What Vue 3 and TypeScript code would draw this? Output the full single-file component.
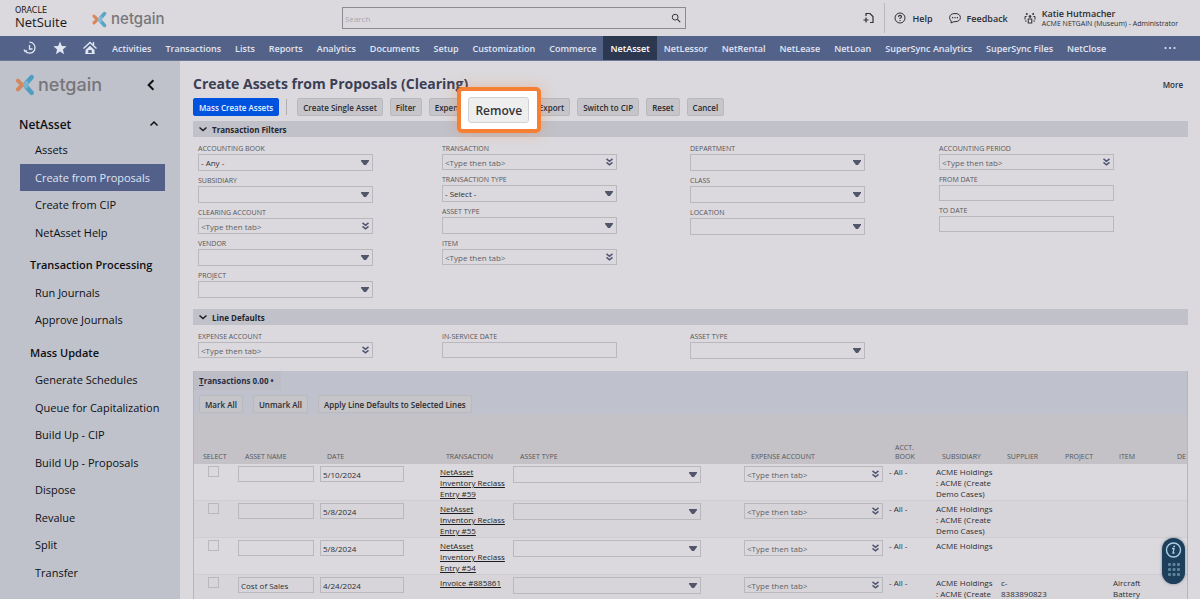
<script setup lang="ts">
import { ref } from 'vue'

type Kind = 'select' | 'lookup' | 'text'
interface Field { id: string; label: string; kind: Kind; value?: string }
interface Row { name: string; date: string; transaction: string; subsidiary: string; supplier: string; item: string }

const navItems = [
  'Activities', 'Transactions', 'Lists', 'Reports', 'Analytics', 'Documents', 'Setup', 'Customization',
  'Commerce', 'NetAsset', 'NetLessor', 'NetRental', 'NetLease', 'NetLoan', 'SuperSync Analytics',
  'SuperSync Files', 'NetClose',
]
const activeNav = ref('NetAsset')

const sideGroups = [
  { title: '', items: ['Assets', 'Create from Proposals', 'Create from CIP', 'NetAsset Help'] },
  { title: 'Transaction Processing', items: ['Run Journals', 'Approve Journals'] },
  {
    title: 'Mass Update',
    items: ['Generate Schedules', 'Queue for Capitalization', 'Build Up - CIP', 'Build Up - Proposals',
      'Dispose', 'Revalue', 'Split', 'Transfer'],
  },
]
const activeSide = ref('Create from Proposals')

const filterColumns: Field[][] = [
  [
    { id: 'book', label: 'ACCOUNTING BOOK', kind: 'select', value: '- Any -' },
    { id: 'subsidiary', label: 'SUBSIDIARY', kind: 'select' },
    { id: 'clearing', label: 'CLEARING ACCOUNT', kind: 'lookup' },
    { id: 'vendor', label: 'VENDOR', kind: 'select' },
    { id: 'project', label: 'PROJECT', kind: 'select' },
  ],
  [
    { id: 'transaction', label: 'TRANSACTION', kind: 'lookup' },
    { id: 'transaction-type', label: 'TRANSACTION TYPE', kind: 'select', value: '- Select -' },
    { id: 'asset-type', label: 'ASSET TYPE', kind: 'select' },
    { id: 'item', label: 'ITEM', kind: 'lookup' },
  ],
  [
    { id: 'department', label: 'DEPARTMENT', kind: 'select' },
    { id: 'class', label: 'CLASS', kind: 'select' },
    { id: 'location', label: 'LOCATION', kind: 'select' },
  ],
  [
    { id: 'period', label: 'ACCOUNTING PERIOD', kind: 'lookup' },
    { id: 'from', label: 'FROM DATE', kind: 'text' },
    { id: 'to', label: 'TO DATE', kind: 'text' },
  ],
]
const defaultColumns: Field[][] = [
  [{ id: 'default-expense', label: 'EXPENSE ACCOUNT', kind: 'lookup' }],
  [{ id: 'in-service', label: 'IN-SERVICE DATE', kind: 'text' }],
  [{ id: 'default-asset-type', label: 'ASSET TYPE', kind: 'select' }],
]
const sections = [
  { title: 'Transaction Filters', columns: filterColumns },
  { title: 'Line Defaults', columns: defaultColumns },
]

const columns = [
  { key: 'select', label: 'SELECT' }, { key: 'name', label: 'ASSET NAME' }, { key: 'date', label: 'DATE' },
  { key: 'transaction', label: 'TRANSACTION' }, { key: 'type', label: 'ASSET TYPE' },
  { key: 'expense', label: 'EXPENSE ACCOUNT' }, { key: 'book', label: 'ACCT. BOOK' },
  { key: 'subsidiary', label: 'SUBSIDIARY' }, { key: 'supplier', label: 'SUPPLIER' },
  { key: 'project', label: 'PROJECT' }, { key: 'item', label: 'ITEM' }, { key: 'dept', label: 'DE' },
]
const full = 'ACME Holdings : ACME (Create Demo Cases)'
const rows: Row[] = [
  { name: '', date: '5/10/2024', transaction: 'NetAsset Inventory Reclass Entry #59', subsidiary: full, supplier: '', item: '' },
  { name: '', date: '5/8/2024', transaction: 'NetAsset Inventory Reclass Entry #55', subsidiary: full, supplier: '', item: '' },
  { name: '', date: '5/8/2024', transaction: 'NetAsset Inventory Reclass Entry #54', subsidiary: 'ACME Holdings', supplier: '', item: '' },
  { name: 'Cost of Sales', date: '4/24/2024', transaction: 'Invoice #885861', subsidiary: 'ACME Holdings : ACME (Create', supplier: 'c- 8383890823', item: 'Aircraft Battery' },
]
const dots = [0, 1, 2, 3, 4, 5, 6, 7, 8]
</script>

<template>
  <div class="app">
    <header class="top">
      <div class="logos">
        <div class="netsuite"><span class="oracle">ORACLE</span><span class="suite">NetSuite</span></div>
        <div class="netgain">
          <svg class="mark" viewBox="0 0 18 20" fill="none" stroke-linecap="round" stroke-linejoin="round">
            <path d="M2.500 6 L5.500 9 M5.500 11 L2.500 14" stroke="#df8358" stroke-width="3.600" />
            <path d="M15 3 L10 8.500 Q9 10 10 11.500 L15 17" stroke="#5ba6c8" stroke-width="4.200" />
            <path d="M10.500 8 Q8.500 10 10 11.500" stroke="#87bdd3" stroke-width="3.600" />
          </svg>
          <span>netgain</span>
        </div>
      </div>
      <div class="search">
        <input type="search" placeholder="Search" aria-label="Search" />
        <button type="button" aria-label="Run search">
          <svg viewBox="0 0 12 12" fill="none" stroke="#38383c"><circle cx="5" cy="5" r="3.500" stroke-width="1.200" /><path d="M7.700 7.700 L11 11" stroke-width="1.500" /></svg>
        </button>
      </div>
      <div class="tools">
        <button type="button" class="tool add" aria-label="Add document">
          <svg viewBox="0 0 12 12" fill="none" stroke="#303034" stroke-width="1.200"><path d="M3 4 V1.500 H7 L10 4.500 V10.500 H7" /><path d="M.5 8 H5.500 M3 5.500 V10.500" /></svg>
        </button>
        <button type="button" class="tool help">
          <svg viewBox="0 0 12 12" fill="none" stroke="#303034"><circle cx="6" cy="6" r="5" /><path d="M4.500 5 Q4.500 3.400 6 3.400 Q7.500 3.400 7.500 4.700 Q7.500 5.500 6 6.200 V7 M6 8 V9" stroke-width="1.100" /></svg>
          Help
        </button>
        <button type="button" class="tool feedback">
          <svg viewBox="0 0 12 12" fill="none" stroke="#303034"><path d="M2.200 9 Q.6 7.500 .6 5.600 Q.8 1.600 6 1.500 Q11.300 1.600 11.400 5.600 Q11.200 9.500 6 9.700 H4.800 L2 11 Z" /><path d="M3 5.700 H4.200 M5.400 5.700 H6.600 M7.800 5.700 H9" stroke-width="1.200" /></svg>
          Feedback
        </button>
        <button type="button" class="tool role">
          <svg viewBox="0 0 12 12" fill="none" stroke="#303034"><rect x="4.200" y="7" width="3.600" height="4" /><circle cx="6" cy="4.500" r=".9" fill="#303034" /><circle cx="2.800" cy="2" r=".6" fill="#303034" /><circle cx="9.200" cy="2" r=".6" fill="#303034" /><path d="M2.600 4.500 H1 V7.500 M9.400 4.500 H11 V7.500 M1 9 H2.600 M11 9 H9.400" /></svg>
          <span class="who"><b>Katie Hutmacher</b><small>ACME NETGAIN (Museum) - Administrator</small></span>
        </button>
      </div>
    </header>

    <nav class="nav">
      <a href="#" class="icon" aria-label="Recent">
        <svg viewBox="0 0 14 14" fill="none" stroke="#e1e6f3" stroke-width="1.300"><path d="M6.500 1.200 A5.500 5.500 0 1 1 2.200 10" /><path d="M1 8.500 L2 10.500 L4 9.500 M6.500 4 V8 H9.500" /></svg>
      </a>
      <a href="#" class="icon" aria-label="Favorites">
        <svg viewBox="0 0 14 14" fill="#e1e6f3"><path d="M7 .5 L8.800 5 L13.600 5.300 L9.900 8.400 L11.100 13.200 L7 10.500 L2.900 13.200 L4.100 8.400 L.4 5.300 L5.200 5 Z" /></svg>
      </a>
      <a href="#" class="icon" aria-label="Home">
        <svg viewBox="0 0 14 14" fill="none" stroke="#e1e6f3" stroke-width="1.400"><path d="M.5 7.500 L7 1.500 L13.500 7.500 M10.500 1 V4" /><path d="M2.500 9 L7 4.800 L11.500 9 V13 H8.700 V9 H5.300 V13 H2.500 Z" fill="#e1e6f3" stroke="none" /><path d="M2.500 12.500 H11.500" stroke-width="1" /></svg>
      </a>
      <a v-for="n in navItems" :key="n" href="#" :class="['link', { active: n === activeNav }]" @click.prevent="activeNav = n">{{ n }}</a>
      <button type="button" class="dots" aria-label="More tabs"><svg viewBox="0 0 12 4" fill="#e1e6f3"><circle cx="1.500" cy="2" r="1.100" /><circle cx="6" cy="2" r="1.100" /><circle cx="10.500" cy="2" r="1.100" /></svg></button>
    </nav>

    <div class="body">
      <aside class="side">
        <div class="side-head">
          <div class="netgain big">
            <svg class="mark" viewBox="0 0 18 20" fill="none" stroke-linecap="round" stroke-linejoin="round">
              <path d="M2.500 6 L5.500 9 M5.500 11 L2.500 14" stroke="#d4875f" stroke-width="3.600" />
              <path d="M15 3 L10 8.500 Q9 10 10 11.500 L15 17" stroke="#4f9dc0" stroke-width="4.200" />
              <path d="M10.500 8 Q8.500 10 10 11.500" stroke="#7db4cc" stroke-width="3.600" />
            </svg>
            <span>netgain</span>
          </div>
          <button type="button" aria-label="Collapse sidebar"><svg viewBox="0 0 10 10" fill="none" stroke="#111"><path d="M7 1 L3 5 L7 9" stroke-width="1.600" /></svg></button>
        </div>
        <div class="side-title">
          NetAsset
          <button type="button" aria-label="Collapse NetAsset"><svg viewBox="0 0 10 10" fill="none" stroke="#111"><path d="M1.500 6.500 L5 3 L8.500 6.500" stroke-width="1.500" /></svg></button>
        </div>
        <section v-for="g in sideGroups" :key="g.title" class="group">
          <h3 v-if="g.title">{{ g.title }}</h3>
          <a v-for="i in g.items" :key="i" href="#" :class="{ active: i === activeSide }" @click.prevent="activeSide = i">{{ i }}</a>
        </section>
      </aside>

      <main class="main">
        <div class="title">
          <h1>Create Assets from Proposals (Clearing)</h1>
          <a href="#">More</a>
        </div>
        <div class="actions">
          <button type="button" class="btn primary">Mass Create Assets</button>
          <span class="divider"></span>
          <button type="button" class="btn">Create Single Asset</button>
          <button type="button" class="btn">Filter</button>
          <button type="button" class="btn">Expense</button>
          <div class="slot">
            <div class="spotlight"><button type="button">Remove</button></div>
          </div>
          <button type="button" class="btn">Export</button>
          <button type="button" class="btn">Switch to CIP</button>
          <button type="button" class="btn">Reset</button>
          <button type="button" class="btn">Cancel</button>
        </div>

        <section v-for="s in sections" :key="s.title" class="section">
          <h2><svg viewBox="0 0 10 10" fill="none" stroke="#1c1c20"><path d="M1.500 3.500 L5 6.500 L8.500 3.500" stroke-width="1.500" /></svg>{{ s.title }}</h2>
          <div class="fields">
            <div v-for="(col, c) in s.columns" :key="c" class="field-col">
              <div v-for="f in col" :key="f.id" class="field">
                <label :for="f.id">{{ f.label }}</label>
                <div v-if="f.kind === 'select'" class="control">
                  <select :id="f.id"><option>{{ f.value }}</option></select>
                  <svg class="arrow" viewBox="0 0 8 5"><path d="M0 0 H8 V1 L5 5 H3 L0 1 Z" /></svg>
                </div>
                <div v-else-if="f.kind === 'lookup'" class="control">
                  <input :id="f.id" type="text" placeholder="&lt;Type then tab&gt;" />
                  <svg class="chev" viewBox="0 0 8 8"><path d="M1 .8 L4 3.300 L7 .8 M1 4.300 L4 6.800 L7 4.300" /></svg>
                </div>
                <div v-else class="control"><input :id="f.id" type="text" /></div>
              </div>
            </div>
          </div>
        </section>

        <section class="lines">
          <div class="tabs"><a href="#"><u>T</u>ransactions 0.00 •</a></div>
          <div class="line-actions">
            <button type="button" class="btn">Mark All</button>
            <button type="button" class="btn">Unmark All</button>
            <button type="button" class="btn">Apply Line Defaults to Selected Lines</button>
          </div>
          <table>
            <colgroup><col v-for="c in columns" :key="c.key" :class="'c-' + c.key" /></colgroup>
            <thead><tr><th v-for="c in columns" :key="c.key" scope="col">{{ c.label }}</th></tr></thead>
            <tbody>
              <tr v-for="(r, i) in rows" :key="i">
                <td class="pick"><input type="checkbox" :aria-label="'Select line ' + (i + 1)" /></td>
                <td><div class="control name"><input type="text" :value="r.name" aria-label="Asset name" /></div></td>
                <td><div class="control date"><input type="text" :value="r.date" aria-label="Date" /></div></td>
                <td class="tran"><a href="#">{{ r.transaction }}</a></td>
                <td>
                  <div class="control type">
                    <select aria-label="Asset type"><option></option></select>
                    <svg class="arrow" viewBox="0 0 8 5"><path d="M0 0 H8 V1 L5 5 H3 L0 1 Z" /></svg>
                  </div>
                </td>
                <td>
                  <div class="control expense">
                    <input type="text" placeholder="&lt;Type then tab&gt;" aria-label="Expense account" />
                    <svg class="chev" viewBox="0 0 8 8"><path d="M1 .8 L4 3.300 L7 .8 M1 4.300 L4 6.800 L7 4.300" /></svg>
                  </div>
                </td>
                <td class="txt">- All -</td>
                <td class="txt">{{ r.subsidiary }}</td>
                <td class="txt">{{ r.supplier }}</td>
                <td></td>
                <td class="txt">{{ r.item }}</td>
                <td></td>
              </tr>
            </tbody>
          </table>
        </section>
      </main>
    </div>

    <button type="button" class="widget" aria-label="Open guide">
      <svg viewBox="0 0 23 46" fill="none">
        <circle cx="11.500" cy="12" r="7" stroke="#a9cfe4" stroke-width="1.400" />
        <path d="M10 10.500 H12 L11 15 H12.500" stroke="#a9cfe4" stroke-width="1.300" /><circle cx="12.200" cy="8.300" r=".9" fill="#a9cfe4" />
        <rect v-for="d in dots" :key="d" :x="6 + (d % 3) * 4.5" :y="25 + Math.floor(d / 3) * 5" width="3" height="3" rx="1" fill="#5d849c" />
      </svg>
    </button>
  </div>
</template>

<style>
html, body { background: #dbd9dd; }
</style>

<style scoped>
.app, .app * { box-sizing: border-box; }
.app {
  height: 100vh; overflow: hidden; display: flex; flex-direction: column;
  font-family: "Open Sans", sans-serif; font-size: 8px; color: #2d2d33; background: #dbd9dd;
}
button { font: inherit; color: inherit; border: 0; background: none; padding: 0; white-space: nowrap; }
a { color: inherit; text-decoration: none; }
svg { display: block; flex: none; }

.top { flex: none; height: 36px; display: flex; align-items: center; padding: 0 22px 0 15px; }
.logos { width: 327px; display: flex; align-items: center; gap: 24px; }
.netsuite { display: flex; flex-direction: column; color: #17171a; }
.oracle { font: 8px/8px "DejaVu Sans", sans-serif; }
.suite { font-size: 13px; line-height: 14px; }
.netgain { display: flex; align-items: center; gap: 3px; color: #77767a; font: 500 15px/20px Inter, sans-serif; padding-top: 2px; }
.netgain .mark { width: 17px; height: 17px; }
.netgain.big { font-size: 18px; padding: 0; }
.netgain.big .mark { width: 20px; height: 22px; }
.search { flex: 0 1 344px; height: 22px; display: flex; align-items: center; border: 1px solid #8b8a8f; padding-right: 4px; }
.search input { flex: 1; min-width: 0; border: 0; background: none; font: 8px "Open Sans", sans-serif; padding: 0 2px; outline: 0; }
.search input::placeholder { color: #aaa8ad; }
.search svg { width: 10px; height: 10px; }
.tools { margin-left: auto; display: flex; align-items: center; height: 30px; font-weight: 600; font-size: 9px; }
.tool { display: flex; align-items: center; gap: 6px; }
.tool svg { width: 12px; height: 12px; }
.add { padding-right: 9px; height: 30px; border-right: 1px solid #b9b8bd; }
.help { padding-left: 9px; }
.feedback { padding-left: 16px; }
.role { padding-left: 16px; }
.who { display: flex; flex-direction: column; text-align: left; }
.who b { font-weight: 600; font-size: 9px; line-height: 11px; }
.who small { font-size: 7px; line-height: 10px; font-weight: 400; }

.nav { flex: none; height: 25px; display: flex; align-items: stretch; padding: 0 24px 0 15px; background: #536289; color: #e1e6f3; font-size: 9px; font-weight: 600; border-bottom: 1px solid #6b789a; }
.icon { width: 30px; display: flex; align-items: center; justify-content: center; }
.icon svg { width: 14px; height: 14px; }
.link { display: flex; align-items: center; padding: 0 7px; white-space: nowrap; }
.link.active { background: #2c3850; color: #fff; }
.dots { margin-left: auto; }
.dots svg { width: 12px; height: 4px; }

.body { flex: 1; min-height: 0; display: flex; }
.side { flex: 0 0 180px; background: #bfc2cb; color: #0e0f13; padding: 10px 15px 0; font-size: 11px; }
.side-head { display: flex; align-items: center; justify-content: space-between; height: 28px; padding-right: 8px; }
.side-head button svg { width: 12px; height: 12px; }
.side-title { display: flex; align-items: center; justify-content: space-between; height: 24px; margin-top: 13px; padding: 0 6px 0 4px; font-size: 12px; font-weight: 600; }
.side-title svg { width: 10px; height: 10px; }
.group { margin-bottom: 5px; padding-left: 5px; }
.group h3 { margin: 0; padding-left: 10px; font-size: 11px; line-height: 2.5; font-weight: 600; white-space: nowrap; }
.group a { display: block; padding-left: 15px; line-height: 2.5; white-space: nowrap; }
.group a.active { background: #53618a; color: #dfe4f2; }

.main { flex: 1; min-width: 0; padding: 12px 12px 0 13px; }
.title { display: flex; justify-content: space-between; align-items: center; height: 22px; padding-right: 5px; }
.title h1 { margin: 0; font-size: 14px; line-height: 22px; font-weight: 700; color: #3b3f55; }
.title a { font-weight: 600; }
.actions { display: flex; align-items: center; gap: 7px; height: 18px; margin-top: 3px; }
.btn { height: 18px; padding: 0 5px; border: 1px solid #b9b8bd; border-radius: 2px; background: #c6c5c9; font-weight: 600; color: #2b2b30; }
.btn.primary { background: #0053df; border-color: #0053df; color: #eaf1ff; }
.divider { width: 1px; height: 16px; background: #b0afb4; margin-right: 3px; }
.slot { position: relative; width: 46px; height: 18px; }
.spotlight {
  position: absolute; z-index: 2; left: 50%; top: 50%; width: 84px; height: 46px; margin: -20px 0 0 -46px;
  display: flex; align-items: center; justify-content: center; background: #fff;
  border: 4px solid #f57f33; border-radius: 5px; box-shadow: 0 0 14px rgba(245, 127, 51, 0.35);
}
.spotlight button { width: 61px; height: 26px; border: 1px solid #d2d2d4; border-radius: 3px; background: #eeeeef; font-size: 12px; font-weight: 600; color: #333338; }

.section h2 { margin: 0; display: flex; align-items: center; gap: 4px; height: 16px; padding-left: 5px; background: #c0c1c9; font-size: 8px; font-weight: 700; color: #25252b; }
.section h2 svg { width: 10px; height: 10px; }
.actions + .section { margin-top: 5px; }
.section + .section { margin-top: 6px; }
.fields { display: grid; grid-template-columns: 244fr 248fr 249fr 249fr; padding: 7px 0 0 5px; }
.field { width: 175px; max-width: 94%; margin-bottom: 5px; }
.field label { display: block; font-size: 7px; line-height: 10px; color: #55555b; }
.control { position: relative; }
.control input, .control select {
  display: block; width: 100%; height: 16px; margin: 0; padding: 0 2px; border: 1px solid #b9b8bd; border-radius: 0;
  background: transparent; appearance: none; font: 8px "Open Sans", sans-serif; color: #2d2d33; outline: 0;
}
.control select { height: 17px; }
.control input::placeholder { color: #5f5f66; opacity: 1; }
.arrow { position: absolute; right: 4px; top: 6px; width: 8px; height: 5px; fill: #51566a; pointer-events: none; }
.chev { position: absolute; right: 3px; top: 4px; width: 9px; height: 8px; fill: none; stroke: #4f5573; stroke-width: 1.500; pointer-events: none; }

.lines { margin-top: 7px; border-left: 1px solid #b5b5bb; border-right: 1px solid #b5b5bb; overflow: hidden; background: #bfc1cd; }
.tabs { height: 19px; display: flex; }
.tabs a { padding: 0 7px 0 5px; background: #bcbdc6; line-height: 19px; font-weight: 700; color: #262c47; }
.line-actions { display: flex; gap: 10px; padding: 5px 5px 2px; }
.line-actions .btn { background: #c4c4c9; border-color: #bab9be; }
table { width: 100%; table-layout: fixed; border-collapse: separate; border-spacing: 0; background: #dbd9dd; }
thead { background: #c4c2c6; }
th { height: 49px; padding: 0 0 3px 9px; vertical-align: bottom; text-align: left; font-size: 7px; line-height: 9px; font-weight: 400; color: #55555b; overflow: hidden; }
td { height: 37px; padding: 2px 2px 1px; vertical-align: top; line-height: 11px; border-bottom: 1px solid #cfcdd2; }
tbody tr:nth-child(even) { background: #d7d5d9; }
.c-select { width: 42px; } .c-name { width: 82px; } .c-date { width: 119px; } .c-transaction { width: 74px; }
.c-type { width: 231px; } .c-expense { width: 144px; } .c-book { width: 47px; } .c-subsidiary { width: 65px; }
.c-supplier { width: 58px; } .c-project { width: 54px; } .c-item { width: 58px; } .c-dept { width: 19px; }
.pick { padding-left: 14px; }
.pick input { display: block; appearance: none; width: 11px; height: 11px; margin: 0; border: 1px solid #b9b8bd; }
.name { width: 76px; } .date { width: 84px; } .type { width: 188px; } .expense { width: 139px; }
td.txt, td.tran { padding-left: 3px; padding-right: 4px; }
td.tran { padding-right: 2px; }
.tran a { display: block; max-width: 68px; color: #1d1d22; text-decoration: underline; }

.widget { position: fixed; right: 15px; bottom: 15px; width: 23px; height: 46px; border-radius: 12px; background: #1d3f5c; box-shadow: 0 0 3px rgba(30, 60, 90, 0.5); }
</style>
